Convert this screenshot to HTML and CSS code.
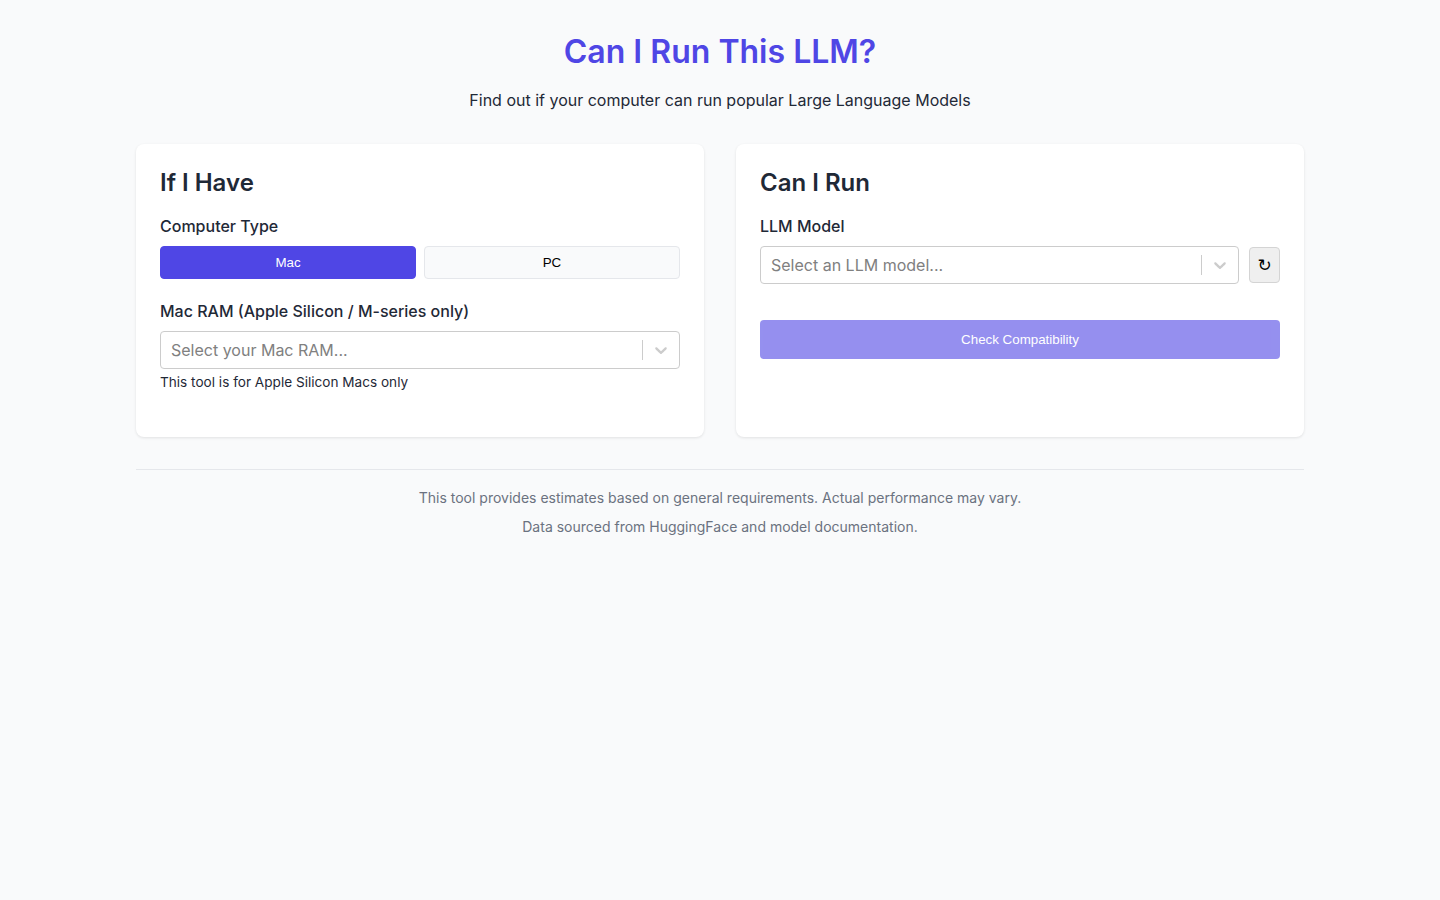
FILE: index.html
```html
<!DOCTYPE html>
<html lang="en">
<head>
<meta charset="utf-8">
<title>Can I Run This LLM?</title>
<link rel="stylesheet" href="styles.css">
</head>
<body>
<div class="app">
  <header class="header">
    <h1 class="title">Can I Run This LLM?</h1>
    <p class="subtitle">Find out if your computer can run popular Large Language Models</p>
  </header>
  <main class="cards">
    <section class="card">
      <h2 class="card-title">If I Have</h2>
      <div class="group">
        <label class="label">Computer Type</label>
        <div class="toggle">
          <button class="toggle-btn active">Mac</button>
          <button class="toggle-btn">PC</button>
        </div>
      </div>
      <div class="group">
        <label class="label">Mac RAM (Apple Silicon / M-series only)</label>
        <div class="select">
          <div class="select-value">Select your Mac RAM...</div>
          <span class="select-sep"></span>
          <span class="select-ind"><svg viewBox="0 0 20 20" width="20" height="20"><path fill="currentColor" d="M4.516 7.548c0.436-0.446 1.043-0.481 1.576 0l3.908 3.747 3.908-3.747c0.533-0.481 1.141-0.446 1.574 0 0.436 0.445 0.408 1.197 0 1.615-0.406 0.418-4.695 4.502-4.695 4.502-0.217 0.223-0.502 0.335-0.787 0.335s-0.57-0.112-0.789-0.335c0 0-4.287-4.084-4.695-4.502s-0.436-1.170 0-1.615z"/></svg></span>
        </div>
        <p class="note">This tool is for Apple Silicon Macs only</p>
      </div>
    </section>
    <section class="card">
      <h2 class="card-title">Can I Run</h2>
      <div class="group">
        <label class="label">LLM Model</label>
        <div class="select-row">
          <div class="select grow">
            <div class="select-value">Select an LLM model...</div>
            <span class="select-sep"></span>
            <span class="select-ind"><svg viewBox="0 0 20 20" width="20" height="20"><path fill="currentColor" d="M4.516 7.548c0.436-0.446 1.043-0.481 1.576 0l3.908 3.747 3.908-3.747c0.533-0.481 1.141-0.446 1.574 0 0.436 0.445 0.408 1.197 0 1.615-0.406 0.418-4.695 4.502-4.695 4.502-0.217 0.223-0.502 0.335-0.787 0.335s-0.57-0.112-0.789-0.335c0 0-4.287-4.084-4.695-4.502s-0.436-1.170 0-1.615z"/></svg></span>
          </div>
          <button class="refresh" title="Refresh">↻</button>
        </div>
      </div>
      <button class="check" disabled>Check Compatibility</button>
    </section>
  </main>
  <footer class="footer">
    <p>This tool provides estimates based on general requirements. Actual performance may vary.</p>
    <p>Data sourced from HuggingFace and model documentation.</p>
  </footer>
</div>
</body>
</html>
```
FILE: styles.css
```css
* { box-sizing: border-box; }
html, body { margin: 0; padding: 0; }
body {
  background: #f9fafb;
  font-family: Inter, "Noto Sans", sans-serif;
  color: #1f2937;
}
.app {
  max-width: 1200px;
  margin: 0 auto;
  padding: 32px 16px;
}
.header { text-align: center; margin-bottom: 32px; }
.title {
  margin: 0;
  font-size: 32px;
  line-height: 40px;
  font-weight: 600;
  color: #4f46e5;
}
.subtitle {
  margin: 16px 0 0;
  font-size: 16px;
  line-height: 24px;
  color: #1f2937;
}
.cards {
  display: grid;
  grid-template-columns: 1fr 1fr;
  gap: 32px;
}
.card {
  background: #fff;
  border-radius: 8px;
  box-shadow: 0 1px 3px rgba(0,0,0,0.1);
  padding: 24px;
}
.card-title {
  margin: 0 0 16px;
  font-size: 24px;
  line-height: 30px;
  font-weight: 600;
  color: #1f2937;
}
.group { margin-bottom: 20px; }
.label {
  display: block;
  font-size: 16px;
  line-height: 24px;
  font-weight: 500;
  margin-bottom: 8px;
}
.toggle { display: flex; gap: 8px; }
.toggle-btn {
  flex: 1;
  height: 33px;
  font-family: "Liberation Sans", Arial, sans-serif;
  font-size: 13.33px;
  border: 1px solid #e5e7eb;
  background: #f9fafb;
  color: #000;
  border-radius: 4px;
  cursor: pointer;
}
.toggle-btn.active {
  background: #4f46e5;
  border-color: #4f46e5;
  color: #fff;
}
.select {
  display: flex;
  align-items: center;
  height: 38px;
  border: 1px solid #cccccc;
  border-radius: 4px;
  background: #fff;
}
.select-value {
  flex: 1;
  padding: 2px 10px;
  font-size: 16px;
  color: #808080;
}
.select-sep {
  align-self: stretch;
  width: 1px;
  margin: 8px 0;
  background: #cccccc;
}
.select-ind {
  display: flex;
  padding: 8px;
  color: #cccccc;
}
.note {
  margin: 3px 0 0;
  font-size: 13.6px;
  line-height: 21px;
  color: #1f2937;
}
.select-row { display: flex; align-items: center; gap: 10px; }
.grow { flex: 1; }
.refresh {
  width: 31px;
  height: 36px;
  padding: 0;
  font-family: "DejaVu Sans", sans-serif;
  font-size: 17px;
  color: #000;
  background: #efefef;
  border: 1px solid #d4d4d4;
  border-radius: 4px;
}
.check {
  display: block;
  width: 100%;
  height: 39px;
  margin-top: 36px;
  font-family: "Liberation Sans", Arial, sans-serif;
  font-size: 13.33px;
  color: #fff;
  background: #4f46e5;
  opacity: 0.6;
  border: 0;
  border-radius: 4px;
}
.footer {
  margin-top: 32px;
  border-top: 1px solid #e5e7eb;
  padding-top: 17px;
  text-align: center;
}
.footer p {
  margin: 0 0 8px;
  font-size: 14px;
  line-height: 21px;
  color: #6b7280;
}
```
